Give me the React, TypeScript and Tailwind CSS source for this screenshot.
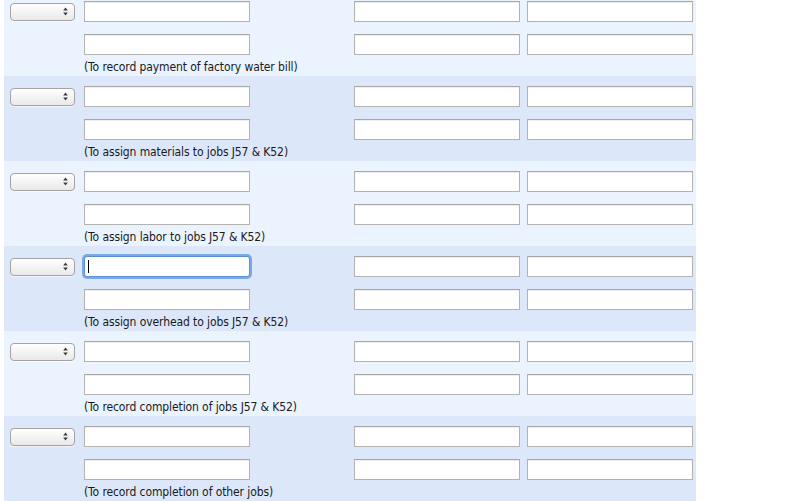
const rows = [
  "(To record payment of factory water bill)",
  "(To assign materials to jobs J57 & K52)",
  "(To assign labor to jobs J57 & K52)",
  "(To assign overhead to jobs J57 & K52)",
  "(To record completion of jobs J57 & K52)",
  "(To record completion of other jobs)",
];

const Field = ({ className = "" }: { className?: string }) => (
  <input
    type="text"
    readOnly
    className={`block h-[21px] w-[166px] border border-[#b3b3b3] border-t-[#a6a6a6] bg-white shadow-[inset_0_1px_1px_rgba(0,0,0,0.07)] outline-none ${className}`}
  />
);

const FocusedField = ({ className = "" }: { className?: string }) => (
  <div className={`relative ${className}`}>
    <input
      type="text"
      readOnly
      className="block h-[21px] w-[166px] rounded-[3px] border border-[#5a8fd6] bg-white outline-none ring-2 ring-[#7aa9e6]"
    />
    <span className="absolute left-[4px] top-[4px] h-[13px] w-px bg-black" />
  </div>
);

const Picker = () => (
  <div className="flex h-[18px] w-[65px] items-center justify-end rounded-[4px] border border-[#a3a3a3] bg-gradient-to-b from-white to-[#e9e9e9] pr-[6px] shadow-[0_1px_0_rgba(255,255,255,0.6)]">
    <svg width="5" height="9" viewBox="0 0 5 9">
      <path d="M2.5 0.5 L4.8 3.5 H0.2 Z" fill="#3a3a3a" />
      <path d="M2.5 8.5 L4.8 5.5 H0.2 Z" fill="#3a3a3a" />
    </svg>
  </div>
);

const Entry = ({ label, index }: { label: string; index: number }) => (
  <div
    className={`h-[85px] pt-[10px] ${index % 2 === 0 ? "bg-[#ebf3fe]" : "bg-[#dce8f9]"} ${index === 0 ? "-mt-[9px]" : ""}`}
  >
    <div className="flex h-[21px] items-center">
      <div className="ml-[6px] w-[65px]">
        <Picker />
      </div>
      {index === 3 ? <FocusedField className="ml-[9px]" /> : <Field className="ml-[9px]" />}
      <Field className="ml-[104px]" />
      <Field className="ml-[7px]" />
    </div>
    <div className="mt-[12px] flex h-[21px]">
      <Field className="ml-[80px]" />
      <Field className="ml-[104px]" />
      <Field className="ml-[7px]" />
    </div>
    <p className="mt-[4px] pl-[80px] text-[12px] leading-[16px] tracking-[-0.1px] text-[#1a1a1a]">{label}</p>
  </div>
);

export default function App() {
  return (
    <div className="h-[502px] w-[804px] overflow-hidden bg-white font-['Tahoma','DejaVu_Sans_Condensed','Liberation_Sans',sans-serif]">
      <div className="ml-[4px] w-[692px]">
        {rows.map((label, i) => (
          <Entry key={i} label={label} index={i} />
        ))}
      </div>
    </div>
  );
}
